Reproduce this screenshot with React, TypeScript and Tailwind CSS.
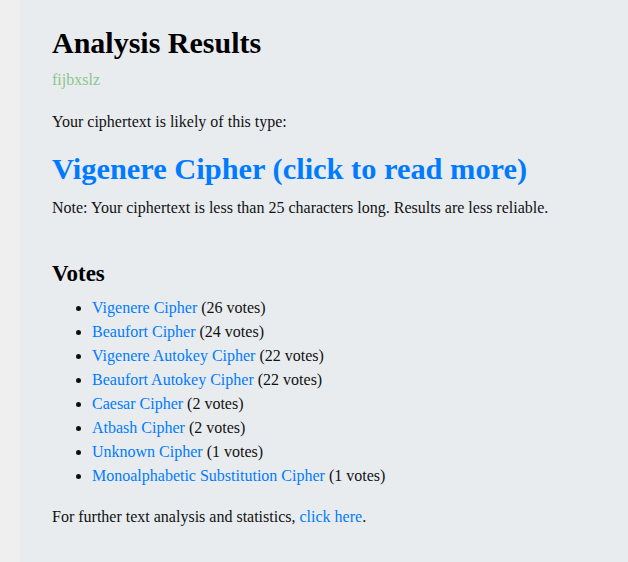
import React from "react";

const votes: [string, number][] = [
  ["Vigenere Cipher", 26],
  ["Beaufort Cipher", 24],
  ["Vigenere Autokey Cipher", 22],
  ["Beaufort Autokey Cipher", 22],
  ["Caesar Cipher", 2],
  ["Atbash Cipher", 2],
  ["Unknown Cipher", 1],
  ["Monoalphabetic Substitution Cipher", 1],
];

export default function App() {
  return (
    <div
      className="flex w-[628px] h-[562px] bg-[#efefef] overflow-hidden text-[#111]"
      style={{ fontFamily: '"Liberation Serif", serif' }}
    >
      <div className="w-[20px] shrink-0" />
      <div className="flex-1 bg-[#e9ecef] pl-[32px] pt-[25px]">
        <h1 className="text-[30px] leading-[36px] font-bold text-black">Analysis Results</h1>
        <div className="mt-[7px] text-[16px] leading-[24px] text-[#8cc68c]">fijbxslz</div>
        <p className="mt-[18px] text-[16px] leading-[24px]">Your ciphertext is likely of this type:</p>
        <a className="block mt-[15px] text-[30.4px] leading-[40px] font-bold text-[#007bff]">
          Vigenere Cipher (click to read more)
        </a>
        <p className="mt-[7px] text-[16px] leading-[24px]">
          Note: Your ciphertext is less than 25 characters long. Results are less reliable.
        </p>
        <h2 className="mt-[40px] text-[23px] leading-[28px] font-bold text-black">Votes</h2>
        <ul className="mt-[8px] list-disc pl-[40px] text-[16px] leading-[24px]">
          {votes.map(([name, n]) => (
            <li key={name}>
              <a className="text-[#007bff]">{name}</a> ({n} votes)
            </li>
          ))}
        </ul>
        <p className="mt-[17px] text-[16px] leading-[24px]">
          For further text analysis and statistics, <a className="text-[#007bff]">click here</a>.
        </p>
      </div>
    </div>
  );
}
